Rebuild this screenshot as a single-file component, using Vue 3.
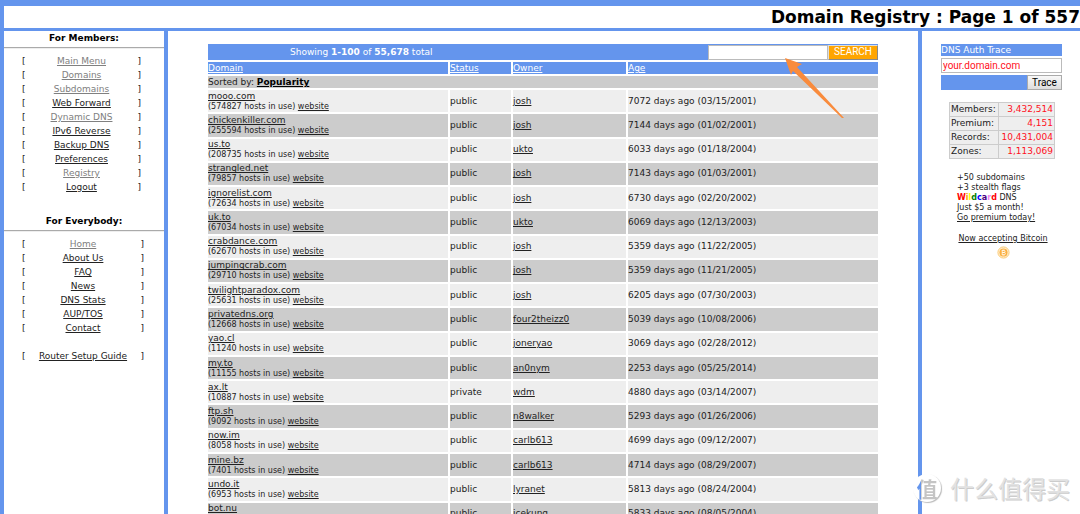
<script setup>
import { ref } from 'vue'

const query = ref('')
const host = ref('your.domain.com')

const members = [
  ['Main Menu', true],
  ['Domains', true],
  ['Subdomains', true],
  ['Web Forward', false],
  ['Dynamic DNS', true],
  ['IPv6 Reverse', false],
  ['Backup DNS', false],
  ['Preferences', false],
  ['Registry', true],
  ['Logout', false],
]

const everybody = [
  ['Home', true],
  ['About Us', false],
  ['FAQ', false],
  ['News', false],
  ['DNS Stats', false],
  ['AUP/TOS', false],
  ['Contact', false],
]

const domains = [
  ['mooo.com', 574827, 'public', 'josh', '7072 days ago (03/15/2001)'],
  ['chickenkiller.com', 255594, 'public', 'josh', '7144 days ago (01/02/2001)'],
  ['us.to', 208735, 'public', 'ukto', '6033 days ago (01/18/2004)'],
  ['strangled.net', 79857, 'public', 'josh', '7143 days ago (01/03/2001)'],
  ['ignorelist.com', 72634, 'public', 'josh', '6730 days ago (02/20/2002)'],
  ['uk.to', 67034, 'public', 'ukto', '6069 days ago (12/13/2003)'],
  ['crabdance.com', 62670, 'public', 'josh', '5359 days ago (11/22/2005)'],
  ['jumpingcrab.com', 29710, 'public', 'josh', '5359 days ago (11/21/2005)'],
  ['twilightparadox.com', 25631, 'public', 'josh', '6205 days ago (07/30/2003)'],
  ['privatedns.org', 12668, 'public', 'four2theizz0', '5039 days ago (10/08/2006)'],
  ['yao.cl', 11240, 'public', 'joneryao', '3069 days ago (02/28/2012)'],
  ['my.to', 11155, 'public', 'an0nym', '2253 days ago (05/25/2014)'],
  ['ax.lt', 10887, 'private', 'wdm', '4880 days ago (03/14/2007)'],
  ['ftp.sh', 9092, 'public', 'n8walker', '5293 days ago (01/26/2006)'],
  ['now.im', 8058, 'public', 'carlb613', '4699 days ago (09/12/2007)'],
  ['mine.bz', 7401, 'public', 'carlb613', '4714 days ago (08/29/2007)'],
  ['undo.it', 6953, 'public', 'lyranet', '5813 days ago (08/24/2004)'],
  ['bot.nu', 6571, 'public', 'icekung', '5833 days ago (08/05/2004)'],
]

const stats = [
  ['Members:', '3,432,514'],
  ['Premium:', '4,151'],
  ['Records:', '10,431,004'],
  ['Zones:', '1,113,069'],
]

const wildcard = [
  ['W', 'red'],
  ['i', 'orange'],
  ['l', 'yellow'],
  ['d', 'green'],
  ['c', 'blue'],
  ['a', 'indigo'],
  ['r', 'violet'],
  ['d', 'red'],
]
</script>

<template>
  <div class="page">
    <header class="title-bar">
      <h1>Domain Registry : Page 1 of 557</h1>
    </header>

    <div class="columns">
      <nav class="side">
        <h2>For Members:</h2>
        <hr />
        <ul class="menu">
          <li v-for="[label, seen] in members" :key="label">
            <span>[</span><a href="#" :class="{ seen }">{{ label }}</a><span>]</span>
          </li>
        </ul>
        <h2 class="second">For Everybody:</h2>
        <hr />
        <ul class="menu wide">
          <li v-for="[label, seen] in everybody" :key="label">
            <span>[</span><a href="#" :class="{ seen }">{{ label }}</a><span>]</span>
          </li>
          <li class="apart"><span>[</span><a href="#">Router Setup Guide</a><span>]</span></li>
        </ul>
      </nav>

      <main class="content">
        <table class="registry">
          <colgroup>
            <col class="c-domain" />
            <col class="c-status" />
            <col class="c-owner" />
            <col class="c-age" />
          </colgroup>
          <thead>
            <tr>
              <td colspan="4" class="tools">
                <form class="search" @submit.prevent>
                  <p>Showing <b>1-100</b> of <b>55,678</b> total</p>
                  <input v-model="query" type="text" aria-label="Search domains" />
                  <button type="submit">SEARCH</button>
                </form>
              </td>
            </tr>
            <tr class="heads">
              <th scope="col"><a href="#">Domain</a></th>
              <th scope="col"><a href="#">Status</a></th>
              <th scope="col"><a href="#">Owner</a></th>
              <th scope="col"><a href="#">Age</a></th>
            </tr>
            <tr class="sorted">
              <td colspan="4">Sorted by: <a href="#"><b>Popularity</b></a></td>
            </tr>
          </thead>
          <tbody>
            <tr v-for="[name, hosts, status, owner, age] in domains" :key="name">
              <td>
                <a href="#">{{ name }}</a>
                <div class="hosts">({{ hosts }} hosts in use) <a href="#">website</a></div>
              </td>
              <td>{{ status }}</td>
              <td><a href="#">{{ owner }}</a></td>
              <td>{{ age }}</td>
            </tr>
          </tbody>
        </table>
        <svg class="pointer" viewBox="0 0 60 62" aria-hidden="true">
          <path d="M0 0 L17 6 L12 9 L59 60 L57 60 L8 13 L6 17 Z" fill="#f98b3c" />
        </svg>
      </main>

      <aside class="extras">
        <form class="trace" @submit.prevent>
          <label for="trace-host">DNS Auth Trace</label>
          <input id="trace-host" v-model="host" type="text" />
          <div class="trace-row"><button type="submit">Trace</button></div>
        </form>

        <table class="stats">
          <tbody>
            <tr v-for="[label, value] in stats" :key="label">
              <th scope="row">{{ label }}</th>
              <td>{{ value }}</td>
            </tr>
          </tbody>
        </table>

        <div class="promo">
          <div>+50 subdomains</div>
          <div>+3 stealth flags</div>
          <div><b><span v-for="([ch, tone], i) in wildcard" :key="i" :class="tone">{{ ch }}</span></b> DNS</div>
          <div>Just $5 a month!</div>
          <div><a href="#">Go premium today!</a></div>
          <div class="bitcoin">
            <a href="#">Now accepting Bitcoin</a>
            <svg viewBox="0 0 14 14" aria-hidden="true">
              <circle cx="7" cy="7" r="6" fill="#fff3dc" stroke="#fbc668" />
              <circle cx="7" cy="7" r="4.4" fill="#fbb040" />
              <path d="M5.6 4.6v4.8M5.2 4.8h2.4a1.1 1.1 0 0 1 0 2.2H5.8h2a1.2 1.2 0 0 1 0 2.4H5.2M6.5 3.8v1M7.6 3.8v1M6.5 9.2v1M7.6 9.2v1" fill="none" stroke="#fff" stroke-width="0.8" />
            </svg>
          </div>
        </div>
      </aside>
    </div>

    <div class="mark"><span class="badge"><span>值</span></span><span>什么值得买</span></div>
  </div>
</template>

<style>
body {
  margin: 0;
  background: #6495ed;
}
</style>

<style scoped>
.page {
  position: relative;
  box-sizing: border-box;
  height: 100vh;
  overflow: hidden;
  display: flex;
  flex-direction: column;
  gap: 3px;
  padding: 6px 0 0 4px;
  background: #6495ed;
  color: #222;
  font-family: "DejaVu Sans", Verdana, sans-serif;
  font-size: 9px;
  line-height: 12px;
}
a {
  color: #222;
}
.title-bar {
  background: #fff;
  text-align: right;
}
h1 {
  margin: 0;
  color: #000;
  font-size: 17px;
  line-height: 22px;
  white-space: nowrap;
}
.columns {
  flex: 1;
  min-height: 0;
  display: grid;
  grid-template-columns: 160px 1fr 158px;
  gap: 4px;
}
.side,
.content,
.extras {
  background: #fff;
  min-width: 0;
}
.side h2 {
  margin: 0;
  color: #000;
  font-size: 9px;
  line-height: 14px;
  text-align: center;
}
.side h2.second {
  margin-top: 20px;
}
hr {
  margin: 2px 0 5px;
  border: 0;
  border-top: 1px solid #aaa;
  border-bottom: 1px solid #eee;
}
.menu {
  list-style: none;
  margin: 0;
  padding: 0 23px 0 18px;
  line-height: 14px;
}
.menu.wide {
  padding-right: 20px;
}
.menu li {
  display: flex;
  justify-content: space-between;
}
.menu .apart {
  margin-top: 14px;
}
.menu .seen {
  color: #808080;
}
.content {
  position: relative;
  padding: 11px 38px 0;
}
.registry {
  width: 100%;
  height: 485px;
  table-layout: fixed;
  border-collapse: separate;
  border-spacing: 2px;
}
.c-domain {
  width: 240px;
}
.c-status {
  width: 61px;
}
.c-owner {
  width: 113px;
}
.registry td,
.registry th {
  padding: 0;
  text-align: left;
  font-weight: normal;
}
.registry thead tr {
  height: 12px;
}
.tools,
.heads th {
  background: #6495ed;
  color: #fff;
}
.heads a {
  color: #fff;
}
.sorted td {
  background: #ccc;
}
.sorted a {
  color: #000;
}
.registry tbody td {
  background: #eee;
}
.registry tbody tr:nth-child(even) td {
  background: #ccc;
}
.registry tbody td {
  line-height: 11px;
}
.hosts {
  font-size: 8px;
  line-height: 10px;
}
.search {
  display: flex;
  align-items: center;
  height: 16px;
}
.search p {
  flex: 1;
  margin: 0;
  padding-left: 82px;
}
.search input {
  box-sizing: border-box;
  width: 120px;
  height: 15px;
  padding: 0 2px;
  border: 1px solid #bbb;
  background: #fff;
  font: 9px "Liberation Sans", Arial, sans-serif;
}
.search button {
  box-sizing: border-box;
  width: 50px;
  height: 15px;
  padding: 0;
  border: 1px outset #ddd;
  background: #ffa500;
  color: #fff;
  font: 10px/12px Roboto, Arial, sans-serif;
}
.pointer {
  position: absolute;
  top: 27px;
  right: 73px;
  width: 60px;
}
.extras {
  padding: 13px 18px 0 19px;
}
.trace {
  display: flex;
  flex-direction: column;
  gap: 2px;
}
.trace label {
  background: #6495ed;
  color: #fff;
}
.trace input {
  box-sizing: border-box;
  width: 100%;
  height: 15px;
  padding: 0 1px;
  border: 1px solid #bbb;
  color: #f12;
  font: 10px Roboto, Arial, sans-serif;
}
.trace-row {
  display: flex;
  justify-content: flex-end;
  background: #6495ed;
}
.trace button {
  box-sizing: border-box;
  width: 35px;
  height: 15px;
  padding: 0;
  border: 1px solid #aaa;
  background: linear-gradient(#f8f8f8, #ddd);
  color: #000;
  font: 10px Roboto, Arial, sans-serif;
}
.stats {
  width: 106px;
  margin: 12px 0 0 8px;
  border-collapse: collapse;
  background: #eee;
}
.stats th,
.stats td {
  padding: 0 1px;
  border: 1px solid #ccc;
  line-height: 13px;
  font-weight: normal;
  text-align: left;
}
.stats td {
  color: #f12;
  text-align: right;
}
.promo {
  margin: 14px 0 0 16px;
  font-size: 8px;
  line-height: 10px;
  white-space: nowrap;
}
.bitcoin {
  display: flex;
  flex-direction: column;
  align-items: center;
  gap: 2px;
  width: 92px;
  margin-top: 11px;
}
.bitcoin svg {
  width: 13px;
}
.red { color: #f00; }
.orange { color: #ffa500; }
.yellow { color: #ff0; }
.green { color: #008000; }
.blue { color: #00f; }
.indigo { color: #4b0082; }
.violet { color: #ee82ee; }
.mark {
  position: absolute;
  right: 10px;
  bottom: 12px;
  display: flex;
  align-items: center;
  gap: 9px;
  color: #e2e2e2;
  font: 24px/28px "Noto Sans CJK SC", sans-serif;
  text-shadow: 1px 1px 0 #ccc;
}
.badge {
  width: 28px;
  height: 28px;
  border-radius: 50%;
  background: #fff;
  box-shadow: 1px 1px 1px #bbb;
  font-size: 21px;
  font-weight: bold;
  text-align: center;
  text-shadow: none;
}
.badge span {
  background: linear-gradient(90deg, #6495ed 20%, #c4c4c4 20%);
  background-clip: text;
  color: transparent;
}
</style>
